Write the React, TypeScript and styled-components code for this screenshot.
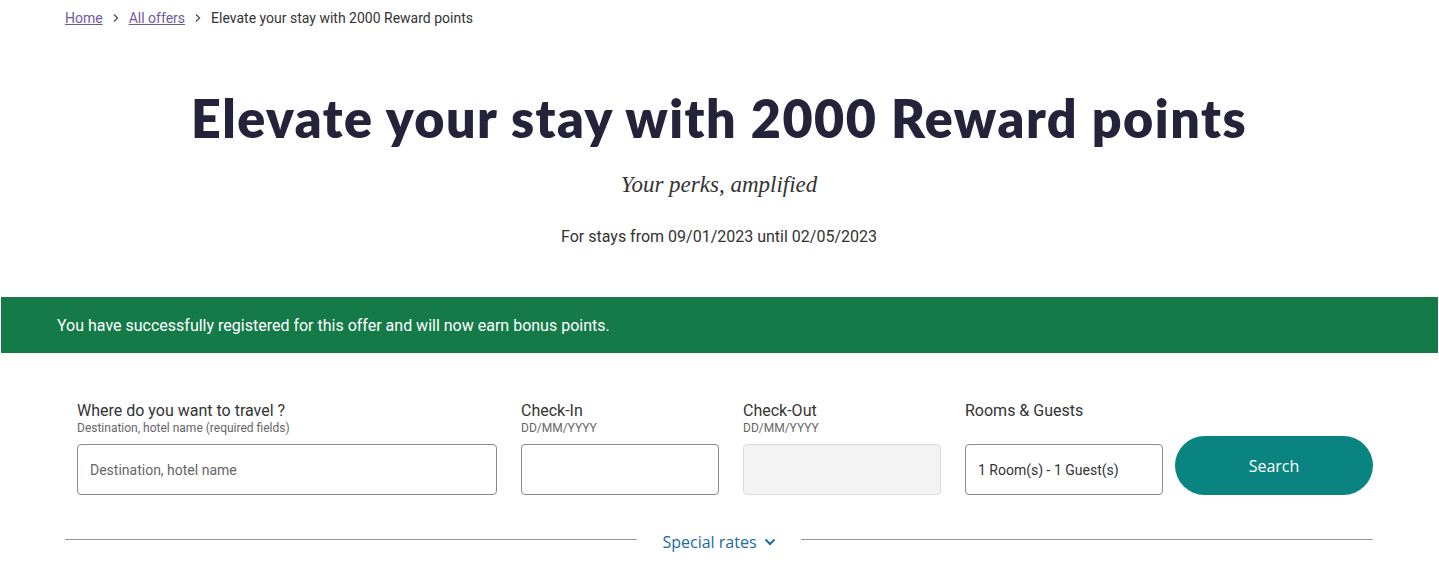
import styled, { createGlobalStyle } from "styled-components";

const GlobalStyle = createGlobalStyle`
    body {
        margin: 0;
        font-family: Roboto, "Liberation Sans", sans-serif;
        background: #ffffff;
        color: #333333;
    }
`

const fields = [
    { label: "Where do you want to travel ?", hint: "Destination, hotel name (required fields)", placeholder: "Destination, hotel name", wide: true },
    { label: "Check-In", hint: "DD/MM/YYYY" },
    { label: "Check-Out", hint: "DD/MM/YYYY", disabled: true },
]

const Chevron = () => (
    <svg width="8" height="10" viewBox="0 0 8 10">
        <path d="M2 1.5 L5.5 5 L2 8.5" fill="none" stroke="#555" strokeWidth="1.4" />
    </svg>
)

const App = () => {
    return (
        <>
            <GlobalStyle/>
            <Page>
                <Breadcrumb>
                    <Crumb href="#">Home</Crumb>
                    <Chevron/>
                    <Crumb href="#">All offers</Crumb>
                    <Chevron/>
                    <Current>Elevate your stay with 2000 Reward points</Current>
                </Breadcrumb>
                <Hero>
                    <Title>Elevate your stay with 2000 Reward points</Title>
                    <Tagline>Your perks, amplified</Tagline>
                    <Dates>For stays from 09/01/2023 until 02/05/2023</Dates>
                </Hero>
            </Page>
            <Banner>You have successfully registered for this offer and will now earn bonus points.</Banner>
            <Page>
                <SearchForm>
                    {fields.map((f) => (
                        <Field key={f.label} $wide={f.wide}>
                            <Label>{f.label}</Label>
                            <Hint>{f.hint}</Hint>
                            <Input placeholder={f.placeholder} disabled={f.disabled} $disabled={f.disabled}/>
                        </Field>
                    ))}
                    <Field>
                        <Label>Rooms &amp; Guests</Label>
                        <Hint>&nbsp;</Hint>
                        <Input readOnly value="1 Room(s) - 1 Guest(s)"/>
                    </Field>
                    <SearchButton>Search</SearchButton>
                </SearchForm>
                <Divider>
                    <Rule/>
                    <RatesToggle>
                        Special rates
                        <svg width="12" height="8" viewBox="0 0 12 8">
                            <path d="M1.5 1.5 L6 6 L10.5 1.5" fill="none" stroke="#1a6aa6" strokeWidth="2" />
                        </svg>
                    </RatesToggle>
                    <Rule/>
                </Divider>
            </Page>
        </>
    )
}

export default App

const Page = styled.div`
    padding: 0 66px 0 65px;
`
const Breadcrumb = styled.nav`
    display: flex;
    align-items: center;
    gap: 9px;
    height: 36px;
    font-size: 14px;
`
const Crumb = styled.a`
    color: #6f5a9e;
    text-decoration: underline;
`
const Current = styled.span`
    color: #333;
`
const Hero = styled.div`
    display: flex;
    flex-direction: column;
    align-items: center;
    padding-top: 52px;
    height: 261px;
    box-sizing: border-box;
`
const Title = styled.h1`
    font-family: Lato, "Noto Sans", sans-serif;
    font-weight: 800;
    font-size: 52px;
    line-height: 60px;
    letter-spacing: 1.5px;
    color: #252339;
    margin: 0;
`
const Tagline = styled.p`
    font-family: "Liberation Serif", serif;
    font-style: italic;
    font-size: 23px;
    color: #333;
    margin: 24px 0 0;
`
const Dates = styled.p`
    font-size: 16px;
    color: #333;
    margin: 29px 0 0;
`
const Banner = styled.div`
    margin: 0 1px;
    height: 56px;
    background: #137a48;
    color: #fff;
    font-size: 16px;
    display: flex;
    align-items: center;
    padding-left: 56px;
`
const SearchForm = styled.form`
    display: flex;
    align-items: flex-end;
    gap: 24px;
    padding: 48px 0 0 12px;
`
const Field = styled.div<{ $wide?: boolean }>`
    display: flex;
    flex-direction: column;
    width: ${(p) => (p.$wide ? "420px" : "198px")};
`
const Label = styled.label`
    font-size: 16px;
    color: #333;
    line-height: 20px;
`
const Hint = styled.span`
    font-size: 12px;
    color: #666;
    line-height: 14px;
    margin-bottom: 9px;
`
const Input = styled.input<{ $disabled?: boolean }>`
    height: 51px;
    box-sizing: border-box;
    border: 1px solid ${(p) => (p.$disabled ? "#dcdcdc" : "#8a8a8a")};
    border-radius: 4px;
    background: ${(p) => (p.$disabled ? "#f3f3f3" : "#fff")};
    padding: 0 12px;
    font-family: Roboto, sans-serif;
    font-size: 14px;
    color: #333;
    &::placeholder {
        color: #666;
    }
`
const SearchButton = styled.button`
    width: 198px;
    height: 59px;
    margin-left: -12px;
    border: none;
    border-radius: 29.5px;
    background: #0a8480;
    color: #fff;
    font-family: "Open Sans", sans-serif;
    font-size: 16px;
`
const Divider = styled.div`
    display: flex;
    align-items: center;
    margin-top: 30px;
    gap: 25px;
`
const Rule = styled.div`
    flex: 1;
    height: 1px;
    background: #999;
`
const RatesToggle = styled.button`
    display: flex;
    align-items: center;
    gap: 7px;
    border: none;
    background: none;
    padding: 0;
    font-family: "Open Sans", sans-serif;
    font-size: 16px;
    color: #1a6aa6;
    margin-top: 6px;
`
